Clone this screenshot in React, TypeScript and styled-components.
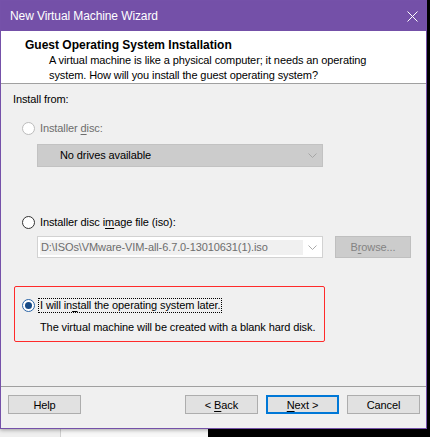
import React from 'react'
import styled, { createGlobalStyle } from 'styled-components'

const FONT = `"Liberation Sans", Arial, sans-serif`

const GlobalStyle = createGlobalStyle`
  html, body {
    margin: 0;
    padding: 0;
  }
  body {
    font-family: ${FONT};
    font-size: 11px;
    letter-spacing: -0.1px;
    background: #000;
  }
`

type RadioProps = { $checked?: boolean; $disabled?: boolean }

export const S = {
  Desktop: styled.div`
    width: 430px;
    height: 437px;
    overflow: hidden;
    background: linear-gradient(to right, #efefef 0 60px, #cfcfcf 60px 61px, #f8f8f8 61px 208px, #000 208px);
  `,
  Window: styled.div`
    width: 427px;
    height: 429px;
    box-sizing: border-box;
    border: 1px solid #7551a9;
    background: #f0f0f0;
    display: flex;
    flex-direction: column;
    box-shadow: 0 1px 4px rgba(0, 0, 0, 0.35);
  `,
  TitleBar: styled.div`
    height: 30px;
    flex: none;
    background: #7450a8;
    display: flex;
    align-items: center;
    justify-content: space-between;
    padding: 0 8px 0 9px;
    color: #fff;
    font-size: 12px;
  `,
  CloseIcon: styled.svg`
    width: 11px;
    height: 11px;
    margin-top: 1px;
  `,
  Header: styled.div`
    flex: none;
    box-sizing: content-box;
    height: 45px;
    background: #fff;
    border-bottom: 1px solid #a0a0a0;
    padding: 7px 0 0 24px;
  `,
  HeaderTitle: styled.div`
    font-weight: 700;
    font-size: 12px;
    letter-spacing: 0;
    line-height: 15px;
    color: #000;
  `,
  HeaderText: styled.div`
    padding-left: 24px;
    line-height: 15px;
    color: #000;
  `,
  Body: styled.div`
    flex: 1;
    display: flex;
    flex-direction: column;
    align-items: flex-start;
    padding: 8px 0 0 12px;
  `,
  SectionLabel: styled.div`
    line-height: 15px;
    color: #000;
  `,
  RadioRow: styled.div<{ $top: number; $indent?: number }>`
    display: flex;
    align-items: center;
    height: 15px;
    margin-top: ${p => p.$top}px;
    margin-left: ${p => p.$indent ?? 9}px;
  `,
  Radio: styled.span<RadioProps>`
    width: 13px;
    height: 13px;
    box-sizing: border-box;
    border-radius: 50%;
    background: #fff;
    border: 1px solid ${p => (p.$disabled ? '#bcbcbc' : p.$checked ? '#2a64a6' : '#333')};
    display: flex;
    align-items: center;
    justify-content: center;
    flex: none;
    &::after {
      content: '';
      display: ${p => (p.$checked ? 'block' : 'none')};
      width: 7px;
      height: 7px;
      border-radius: 50%;
      background: #174a86;
    }
  `,
  RadioLabel: styled.span<{ $disabled?: boolean; $focused?: boolean }>`
    margin-left: 3px;
    line-height: 13px;
    padding: 0 1px;
    border: 1px ${p => (p.$focused ? 'dotted #000' : 'solid transparent')};
    color: ${p => (p.$disabled ? '#6d6d6d' : '#000')};
    white-space: nowrap;
  `,
  Key: styled.u`
    text-decoration: underline;
    text-underline-offset: 2px;
  `,
  Row: styled.div<{ $top: number }>`
    display: flex;
    margin-top: ${p => p.$top}px;
    margin-left: 24px;
  `,
  Select: styled.div<{ $disabled?: boolean }>`
    width: 286px;
    height: ${p => (p.$disabled ? 23 : 22)}px;
    box-sizing: border-box;
    display: flex;
    align-items: center;
    justify-content: space-between;
    background: ${p => (p.$disabled ? '#cccccc' : '#fff')};
    border: 1px solid ${p => (p.$disabled ? '#c2c2c2' : '#d2d2d2')};
    padding: ${p => (p.$disabled ? '0 5px 0 21px' : '0 5px 0 2px')};
    color: #000;
  `,
  SelectValue: styled.span<{ $muted?: boolean }>`
    flex: 1;
    line-height: 15px;
    padding: 0 1px;
    margin-right: 5px;
    background: ${p => (p.$muted ? '#f0f0f0' : 'transparent')};
    color: ${p => (p.$muted ? '#6d6d6d' : '#000')};
    white-space: nowrap;
  `,
  Chevron: styled.svg`
    width: 9px;
    height: 5px;
    flex: none;
  `,
  SideButton: styled.div`
    width: 76px;
    height: 22px;
    box-sizing: border-box;
    margin-left: 12px;
    background: #cccccc;
    border: 1px solid #bfbfbf;
    color: #838383;
    display: flex;
    align-items: center;
    justify-content: center;
  `,
  Highlight: styled.div`
    margin-top: 28px;
    margin-left: 1px;
    width: 311px;
    box-sizing: border-box;
    border: 1px solid #ff2a2a;
    border-radius: 2px;
    padding: 11px 0 6px 7px;
  `,
  Note: styled.div`
    margin: 7px 0 0 18px;
    line-height: 15px;
    color: #000;
    white-space: nowrap;
  `,
  Footer: styled.div`
    flex: none;
    height: 33px;
    border-top: 1px solid #a0a0a0;
    display: flex;
    align-items: flex-start;
    padding: 8px 6px 0 7px;
    gap: 8px;
  `,
  Button: styled.div<{ $default?: boolean }>`
    width: 73px;
    height: 19px;
    box-sizing: border-box;
    background: #e1e1e1;
    border: ${p => (p.$default ? '2px solid #0078d7' : '1px solid #adadad')};
    color: #000;
    display: flex;
    align-items: center;
    justify-content: center;
    white-space: pre;
  `,
  Spacer: styled.div`
    flex: 1;
  `
}

const Chevron = ({ color }: { color: string }) => (
  <S.Chevron viewBox="0 0 9 5">
    <polyline points="0.5,0.5 4.5,4.5 8.5,0.5" fill="none" stroke={color} strokeWidth="1" />
  </S.Chevron>
)

export default function App() {
  return (
    <>
      <GlobalStyle />
      <S.Desktop>
        <S.Window>
          <S.TitleBar>
            <span>New Virtual Machine Wizard</span>
            <S.CloseIcon viewBox="0 0 11 11">
              <path d="M0.5 0.5 L10.5 10.5 M10.5 0.5 L0.5 10.5" stroke="#fff" strokeWidth="1" />
            </S.CloseIcon>
          </S.TitleBar>

          <S.Header>
            <S.HeaderTitle>Guest Operating System Installation</S.HeaderTitle>
            <S.HeaderText>
              A virtual machine is like a physical computer; it needs an operating
              <br />
              system. How will you install the guest operating system?
            </S.HeaderText>
          </S.Header>

          <S.Body>
            <S.SectionLabel>Install from:</S.SectionLabel>

            <S.RadioRow $top={14}>
              <S.Radio $disabled />
              <S.RadioLabel $disabled>
                Installer <S.Key>d</S.Key>isc:
              </S.RadioLabel>
            </S.RadioRow>
            <S.Row $top={8}>
              <S.Select $disabled>
                <S.SelectValue>No drives available</S.SelectValue>
                <Chevron color="#a6a6a6" />
              </S.Select>
            </S.Row>

            <S.RadioRow $top={48}>
              <S.Radio />
              <S.RadioLabel>
                Installer disc i<S.Key>m</S.Key>age file (iso):
              </S.RadioLabel>
            </S.RadioRow>
            <S.Row $top={6}>
              <S.Select>
                <S.SelectValue $muted>D:\ISOs\VMware-VIM-all-6.7.0-13010631(1).iso</S.SelectValue>
                <Chevron color="#ababab" />
              </S.Select>
              <S.SideButton>
                <span>
                  B<S.Key>r</S.Key>owse...
                </span>
              </S.SideButton>
            </S.Row>

            <S.Highlight>
              <S.RadioRow $top={0} $indent={0}>
                <S.Radio $checked />
                <S.RadioLabel $focused>
                  I will in<S.Key>s</S.Key>tall the operating system later.
                </S.RadioLabel>
              </S.RadioRow>
              <S.Note>The virtual machine will be created with a blank hard disk.</S.Note>
            </S.Highlight>
          </S.Body>

          <S.Footer>
            <S.Button>Help</S.Button>
            <S.Spacer />
            <S.Button>
              <span>
                &lt; <S.Key>B</S.Key>ack
              </span>
            </S.Button>
            <S.Button $default>
              <span>
                <S.Key>N</S.Key>ext &gt;
              </span>
            </S.Button>
            <S.Button>Cancel</S.Button>
          </S.Footer>
        </S.Window>
      </S.Desktop>
    </>
  )
}
